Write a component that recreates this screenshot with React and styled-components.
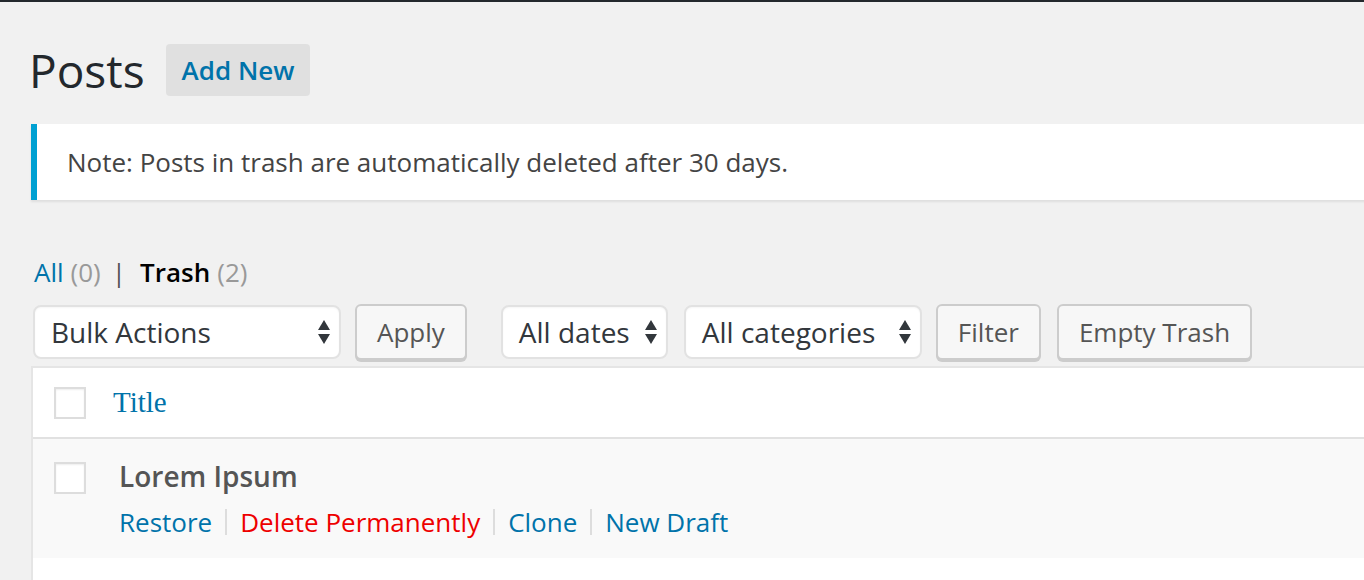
import styled, { createGlobalStyle } from 'styled-components'

const GlobalStyle = createGlobalStyle`
  html, body {
    margin: 0;
    padding: 0;
    background: #f1f1f1;
    overflow: hidden;
  }
  body {
    font-family: "Open Sans", "Liberation Sans", sans-serif;
    color: #444;
  }
`

const StyledPage = styled.div`
  border-top: 2px solid #23282d;
  min-height: 578px;
  padding: 0 0 0 31px;
  width: 1420px;
`

const StyledHeader = styled.div`
  display: flex;
  align-items: center;
  gap: 21px;
  padding-top: 42px;
  height: 52px;
  margin-left: -2px;
`

const StyledHeading = styled.h1`
  margin: 0;
  font-size: 46px;
  font-weight: 400;
  color: #23282d;
  line-height: 52px;
`

const StyledAddNew = styled.button`
  height: 52px;
  padding: 0 16px;
  border: none;
  border-radius: 4px;
  background: #e0e0e0;
  color: #0073aa;
  font-family: inherit;
  font-size: 26px;
  font-weight: 600;
`

const StyledNotice = styled.div`
  margin-top: 28px;
  height: 76px;
  display: flex;
  align-items: center;
  background: #fff;
  border-left: 6px solid #00a0d2;
  box-shadow: 0 2px 2px rgba(0, 0, 0, 0.08);
  padding-left: 30px;
  font-size: 26px;
  color: #444;
`

const StyledSubsub = styled.div`
  margin-top: 54px;
  display: flex;
  align-items: center;
  font-size: 26px;
  padding-left: 3px;
  height: 36px;
`

const StyledLink = styled.span`
  color: ${p => p.$current ? '#000' : '#0073aa'};
  font-weight: ${p => p.$current ? 600 : 400};
`

const StyledCount = styled.span`
  color: #999;
  margin-left: 7px;
`

const StyledPipe = styled.span`
  color: #555;
  margin: 0 14px 0 11px;
`

const StyledToolbar = styled.div`
  margin-top: 14px;
  display: flex;
  align-items: center;
  padding-left: 2px;
  height: 56px;
`

const StyledSelect = styled.div`
  width: ${p => p.$w}px;
  height: 54px;
  box-sizing: border-box;
  margin-right: ${p => p.$mr}px;
  background: #fff;
  border: 2px solid #e2e2e2;
  border-radius: 8px;
  box-shadow: inset 0 1px 2px rgba(0, 0, 0, 0.04);
  display: flex;
  align-items: center;
  justify-content: space-between;
  padding: 0 8px 0 16px;
  font-size: 28px;
  color: #32373c;
`

const StyledButton = styled.button`
  height: 56px;
  box-sizing: border-box;
  margin-right: ${p => p.$mr}px;
  padding: 0 20px;
  background: #f7f7f7;
  border: 2px solid #ccc;
  border-radius: 6px;
  box-shadow: 0 2px 0 #ccc;
  font-family: inherit;
  font-size: 26px;
  color: #555;
`

const StyledArrows = styled.svg`
  width: 14px;
  height: 26px;
  flex: none;
`

const StyledTable = styled.div`
  margin-top: 6px;
  background: #fff;
  border: 2px solid #e5e5e5;
  border-right: none;
`

const StyledHeadRow = styled.div`
  display: flex;
  align-items: center;
  height: 69px;
  border-bottom: 2px solid #e1e1e1;
`

const StyledRow = styled.div`
  display: flex;
  align-items: flex-start;
  background: #f9f9f9;
  height: 119px;
  padding-top: 23px;
  box-sizing: border-box;
`

const StyledCheckbox = styled.div`
  width: 32px;
  height: 32px;
  box-sizing: border-box;
  border: 2px solid #ddd;
  background: #fff;
  box-shadow: inset 0 1px 2px rgba(0, 0, 0, 0.07);
  margin-left: 21px;
  flex: none;
`

const StyledTitleHead = styled.span`
  margin-left: 27px;
  font-family: "Liberation Serif", "DejaVu Serif", serif;
  font-size: 29px;
  color: #0073aa;
`

const StyledPostCell = styled.div`
  margin-left: 33px;
  margin-top: -6px;
`

const StyledPostTitle = styled.div`
  font-size: 28px;
  font-weight: 600;
  color: #555;
  line-height: 40px;
`

const StyledActions = styled.div`
  margin-top: 8px;
  font-size: 26px;
  line-height: 36px;
  display: flex;
  align-items: center;
`

const StyledAction = styled.span`
  color: ${p => p.$danger ? '#e00' : '#0073aa'};
`

const StyledSep = styled.span`
  display: inline-block;
  width: 2px;
  height: 26px;
  background: #ddd;
  margin: 0 13px;
`

const StyledFiller = styled.div`
  height: 40px;
`

const Arrows = () => (
  <StyledArrows viewBox="0 0 14 26">
    <path d="M7 1 L13 11 L1 11 Z" fill="#32373c" />
    <path d="M7 25 L13 15 L1 15 Z" fill="#32373c" />
  </StyledArrows>
)

export default () => {
  return (
    <StyledPage>
      <GlobalStyle />
      <StyledHeader>
        <StyledHeading>Posts</StyledHeading>
        <StyledAddNew>Add New</StyledAddNew>
      </StyledHeader>

      <StyledNotice>
        Note: Posts in trash are automatically deleted after 30 days.
      </StyledNotice>

      <StyledSubsub>
        <StyledLink>All</StyledLink>
        <StyledCount>(0)</StyledCount>
        <StyledPipe>|</StyledPipe>
        <StyledLink $current>Trash</StyledLink>
        <StyledCount>(2)</StyledCount>
      </StyledSubsub>

      <StyledToolbar>
        <StyledSelect $w={308} $mr={14}>Bulk Actions<Arrows /></StyledSelect>
        <StyledButton $mr={34}>Apply</StyledButton>
        <StyledSelect $w={167} $mr={16}>All dates<Arrows /></StyledSelect>
        <StyledSelect $w={238} $mr={14}>All categories<Arrows /></StyledSelect>
        <StyledButton $mr={16}>Filter</StyledButton>
        <StyledButton $mr={0}>Empty Trash</StyledButton>
      </StyledToolbar>

      <StyledTable>
        <StyledHeadRow>
          <StyledCheckbox />
          <StyledTitleHead>Title</StyledTitleHead>
        </StyledHeadRow>
        <StyledRow>
          <StyledCheckbox />
          <StyledPostCell>
            <StyledPostTitle>Lorem Ipsum</StyledPostTitle>
            <StyledActions>
              <StyledAction>Restore</StyledAction>
              <StyledSep />
              <StyledAction $danger>Delete Permanently</StyledAction>
              <StyledSep />
              <StyledAction>Clone</StyledAction>
              <StyledSep />
              <StyledAction>New Draft</StyledAction>
            </StyledActions>
          </StyledPostCell>
        </StyledRow>
        <StyledFiller />
      </StyledTable>
    </StyledPage>
  )
}
